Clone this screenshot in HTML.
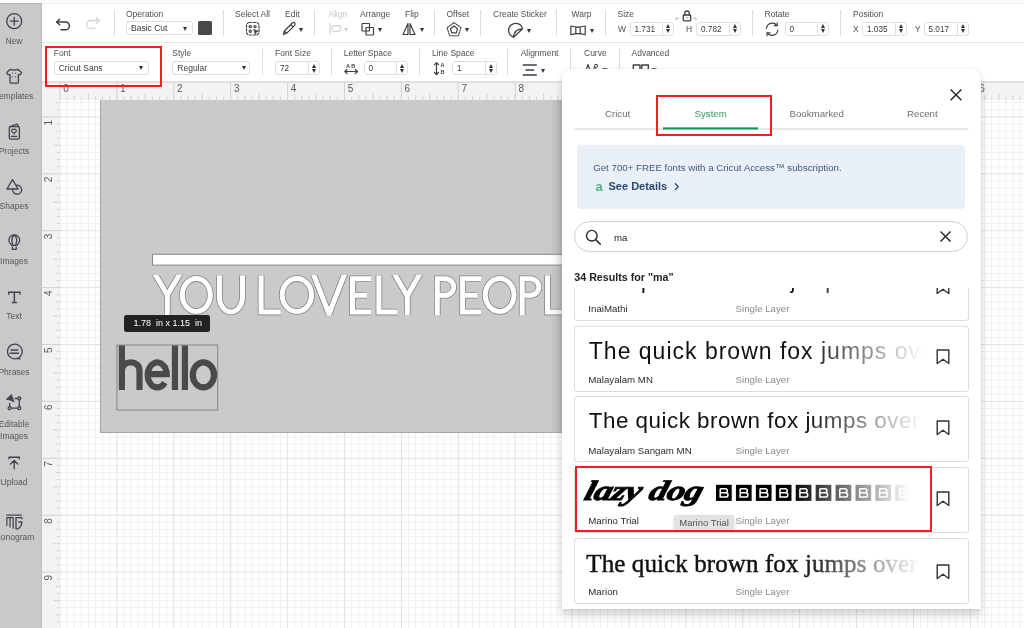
<!DOCTYPE html>
<html><head><meta charset="utf-8">
<style>
*{box-sizing:border-box;margin:0;padding:0}
html,body{width:1024px;height:628px;overflow:hidden;background:#fff;font-family:"Liberation Sans",sans-serif;color:#3a3a3a}
.abs{position:absolute}
#top{left:0;top:0;width:1024px;height:3px;background:#fcfcfc}
#side{left:0;top:3px;width:42px;height:625px;background:#c9c9c9;box-shadow:inset 0 1.5px 0 #bcbcbc,inset -1px 0 0 #bdbdbd}
.si{position:absolute;left:-14px;width:56px;text-align:center;font-size:8.5px;color:#55575f;white-space:nowrap}
#tb1{left:42px;top:3px;width:982px;height:40px;background:#fff;border-top:1.5px solid #eaeaea;border-bottom:1.5px solid #e6e6e6}
#tb2{left:42px;top:43px;width:982px;height:39px;background:#fff;border-bottom:1px solid #e2e2e2}
.lbl{position:absolute;font-size:8.5px;color:#4f4f4f;white-space:nowrap}
.sep{position:absolute;width:1px;background:#e0e0e0}
.dd{position:absolute;border:1px solid #dedede;border-radius:3px;background:#fff;font-size:8.5px;color:#3a3a3a;padding-left:4px;line-height:13px;white-space:nowrap}
.tri{position:absolute;width:0;height:0;border-left:2.3px solid transparent;border-right:2.3px solid transparent;border-top:4.2px solid #333;margin-left:0.7px;margin-top:0.5px}
#rulh{left:42px;top:82px;width:982px;height:18px;background:#f3f3f3}
#rulv{left:42px;top:82px;width:18px;height:546px;background:#f3f3f3}
#grid{left:60px;top:100px;width:964px;height:528px;background-color:#fff;
 background-image:
 linear-gradient(to right,#d9d9d9 1px,transparent 1px),
 linear-gradient(to bottom,#d9d9d9 1px,transparent 1px),
 linear-gradient(to right,#ececec 1px,transparent 1px),
 linear-gradient(to bottom,#ececec 1px,transparent 1px);
 background-size:57px 57px,57px 57px,7.125px 7.125px,7.125px 7.125px;
 background-position:0 17px,0 17px,0 17px,0 17px}
#mat{left:100.2px;top:100px;width:470px;height:332.7px;background:#cacaca;border-left:1.6px solid #a4a4a4;border-bottom:1.6px solid #a4a4a4;border-bottom-left-radius:1.5px}
#panel{left:561.5px;top:69px;width:419.5px;height:540px;background:#fff;border-radius:10px 10px 0 0;box-shadow:0 0 4px rgba(0,0,0,0.09),0 6px 9px rgba(0,0,0,0.17)}
.tabt{font-size:9.7px;color:#707070;white-space:nowrap}
.card{position:absolute;left:12.3px;width:395px;border:1px solid #dcdcdc;border-radius:3px;background:#fff;overflow:hidden}
.cname{position:absolute;left:13px;font-size:9.7px;color:#2a2a2a;white-space:nowrap}
.clay{position:absolute;left:160.3px;font-size:9.7px;color:#8a8a8a;white-space:nowrap}
.bm{position:absolute;left:362px}
.num{position:absolute;top:21.5px;height:14px;border:1px solid #e0e0e0;border-radius:3px;background:#fff;font-size:8.2px;color:#3a3a3a;padding-left:4px;line-height:14.5px}
.num:after{content:"";position:absolute;right:10px;top:0;bottom:0;width:1px;background:#e0e0e0}
.num:before{content:"";position:absolute;right:2.6px;top:1.8px;width:0;height:0;border-left:2.6px solid transparent;border-right:2.6px solid transparent;border-bottom:4px solid #333}
.num i{position:absolute;right:2.6px;top:6.6px;width:0;height:0;border-left:2.6px solid transparent;border-right:2.6px solid transparent;border-top:4px solid #333}
</style></head><body><div style="position:absolute;left:0;top:0;width:1024px;height:628px;will-change:transform">
<div class="abs" id="top"></div>

<!-- grid / rulers -->
<svg class="abs" style="left:0;top:0" width="1024" height="628"><path d="M67.11 100V628M74.22 100V628M81.34 100V628M88.45 100V628M95.56 100V628M102.67 100V628M109.79 100V628M124.01 100V628M131.12 100V628M138.24 100V628M145.35 100V628M152.46 100V628M159.57 100V628M166.69 100V628M180.91 100V628M188.03 100V628M195.14 100V628M202.25 100V628M209.36 100V628M216.47 100V628M223.59 100V628M237.81 100V628M244.92 100V628M252.04 100V628M259.15 100V628M266.26 100V628M273.38 100V628M280.49 100V628M294.71 100V628M301.82 100V628M308.94 100V628M316.05 100V628M323.16 100V628M330.27 100V628M337.39 100V628M351.61 100V628M358.72 100V628M365.84 100V628M372.95 100V628M380.06 100V628M387.18 100V628M394.29 100V628M408.51 100V628M415.62 100V628M422.74 100V628M429.85 100V628M436.96 100V628M444.07 100V628M451.19 100V628M465.41 100V628M472.52 100V628M479.64 100V628M486.75 100V628M493.86 100V628M500.97 100V628M508.09 100V628M522.31 100V628M529.42 100V628M536.54 100V628M543.65 100V628M550.76 100V628M557.88 100V628M564.99 100V628M579.21 100V628M586.32 100V628M593.44 100V628M600.55 100V628M607.66 100V628M614.77 100V628M621.89 100V628M636.11 100V628M643.23 100V628M650.34 100V628M657.45 100V628M664.56 100V628M671.67 100V628M678.79 100V628M693.01 100V628M700.12 100V628M707.24 100V628M714.35 100V628M721.46 100V628M728.57 100V628M735.69 100V628M749.91 100V628M757.02 100V628M764.14 100V628M771.25 100V628M778.36 100V628M785.48 100V628M792.59 100V628M806.81 100V628M813.92 100V628M821.04 100V628M828.15 100V628M835.26 100V628M842.38 100V628M849.49 100V628M863.71 100V628M870.82 100V628M877.94 100V628M885.05 100V628M892.16 100V628M899.27 100V628M906.39 100V628M920.61 100V628M927.73 100V628M934.84 100V628M941.95 100V628M949.06 100V628M956.17 100V628M963.29 100V628M977.51 100V628M984.62 100V628M991.74 100V628M998.85 100V628M1005.96 100V628M1013.07 100V628M1020.19 100V628M60 102.67H1024M60 109.79H1024M60 124.01H1024M60 131.12H1024M60 138.24H1024M60 145.35H1024M60 152.46H1024M60 159.57H1024M60 166.69H1024M60 180.91H1024M60 188.03H1024M60 195.14H1024M60 202.25H1024M60 209.36H1024M60 216.47H1024M60 223.59H1024M60 237.81H1024M60 244.92H1024M60 252.04H1024M60 259.15H1024M60 266.26H1024M60 273.38H1024M60 280.49H1024M60 294.71H1024M60 301.82H1024M60 308.94H1024M60 316.05H1024M60 323.16H1024M60 330.27H1024M60 337.39H1024M60 351.61H1024M60 358.72H1024M60 365.84H1024M60 372.95H1024M60 380.06H1024M60 387.18H1024M60 394.29H1024M60 408.51H1024M60 415.62H1024M60 422.74H1024M60 429.85H1024M60 436.96H1024M60 444.07H1024M60 451.19H1024M60 465.41H1024M60 472.52H1024M60 479.64H1024M60 486.75H1024M60 493.86H1024M60 500.97H1024M60 508.09H1024M60 522.31H1024M60 529.42H1024M60 536.54H1024M60 543.65H1024M60 550.76H1024M60 557.88H1024M60 564.99H1024M60 579.21H1024M60 586.32H1024M60 593.44H1024M60 600.55H1024M60 607.66H1024M60 614.77H1024M60 621.89H1024" stroke="#f0f0f0" stroke-width="1" fill="none"/><path d="M60.00 100V628M116.90 100V628M173.80 100V628M230.70 100V628M287.60 100V628M344.50 100V628M401.40 100V628M458.30 100V628M515.20 100V628M572.10 100V628M629.00 100V628M685.90 100V628M742.80 100V628M799.70 100V628M856.60 100V628M913.50 100V628M970.40 100V628M60 116.90H1024M60 173.80H1024M60 230.70H1024M60 287.60H1024M60 344.50H1024M60 401.40H1024M60 458.30H1024M60 515.20H1024M60 572.10H1024" stroke="#e2e2e2" stroke-width="1" fill="none"/></svg>
<svg class="abs" style="left:0;top:0" width="1024" height="628"><rect x="42" y="82" width="982" height="18" fill="#f3f3f3"/><rect x="42" y="82" width="18" height="546" fill="#f3f3f3"/><path d="M42 82.5H1024" stroke="#dedede"/><path d="M60.00 82V100M67.11 96.8V100M74.22 95.2V100M81.34 96.8V100M88.45 93.3V100M95.56 96.8V100M102.67 95.2V100M109.79 96.8V100M116.90 82V100M124.01 96.8V100M131.12 95.2V100M138.24 96.8V100M145.35 93.3V100M152.46 96.8V100M159.57 95.2V100M166.69 96.8V100M173.80 82V100M180.91 96.8V100M188.03 95.2V100M195.14 96.8V100M202.25 93.3V100M209.36 96.8V100M216.47 95.2V100M223.59 96.8V100M230.70 82V100M237.81 96.8V100M244.92 95.2V100M252.04 96.8V100M259.15 93.3V100M266.26 96.8V100M273.38 95.2V100M280.49 96.8V100M287.60 82V100M294.71 96.8V100M301.82 95.2V100M308.94 96.8V100M316.05 93.3V100M323.16 96.8V100M330.27 95.2V100M337.39 96.8V100M344.50 82V100M351.61 96.8V100M358.72 95.2V100M365.84 96.8V100M372.95 93.3V100M380.06 96.8V100M387.18 95.2V100M394.29 96.8V100M401.40 82V100M408.51 96.8V100M415.62 95.2V100M422.74 96.8V100M429.85 93.3V100M436.96 96.8V100M444.07 95.2V100M451.19 96.8V100M458.30 82V100M465.41 96.8V100M472.52 95.2V100M479.64 96.8V100M486.75 93.3V100M493.86 96.8V100M500.97 95.2V100M508.09 96.8V100M515.20 82V100M522.31 96.8V100M529.42 95.2V100M536.54 96.8V100M543.65 93.3V100M550.76 96.8V100M557.88 95.2V100M564.99 96.8V100M572.10 82V100M579.21 96.8V100M586.32 95.2V100M593.44 96.8V100M600.55 93.3V100M607.66 96.8V100M614.77 95.2V100M621.89 96.8V100M629.00 82V100M636.11 96.8V100M643.23 95.2V100M650.34 96.8V100M657.45 93.3V100M664.56 96.8V100M671.67 95.2V100M678.79 96.8V100M685.90 82V100M693.01 96.8V100M700.12 95.2V100M707.24 96.8V100M714.35 93.3V100M721.46 96.8V100M728.57 95.2V100M735.69 96.8V100M742.80 82V100M749.91 96.8V100M757.02 95.2V100M764.14 96.8V100M771.25 93.3V100M778.36 96.8V100M785.48 95.2V100M792.59 96.8V100M799.70 82V100M806.81 96.8V100M813.92 95.2V100M821.04 96.8V100M828.15 93.3V100M835.26 96.8V100M842.38 95.2V100M849.49 96.8V100M856.60 82V100M863.71 96.8V100M870.82 95.2V100M877.94 96.8V100M885.05 93.3V100M892.16 96.8V100M899.27 95.2V100M906.39 96.8V100M913.50 82V100M920.61 96.8V100M927.73 95.2V100M934.84 96.8V100M941.95 93.3V100M949.06 96.8V100M956.17 95.2V100M963.29 96.8V100M970.40 82V100M977.51 96.8V100M984.62 95.2V100M991.74 96.8V100M998.85 93.3V100M1005.96 96.8V100M1013.07 95.2V100M1020.19 96.8V100M55.2 102.67H60M56.8 109.79H60M42 116.90H60M56.8 124.01H60M55.2 131.12H60M56.8 138.24H60M53.3 145.35H60M56.8 152.46H60M55.2 159.57H60M56.8 166.69H60M42 173.80H60M56.8 180.91H60M55.2 188.03H60M56.8 195.14H60M53.3 202.25H60M56.8 209.36H60M55.2 216.47H60M56.8 223.59H60M42 230.70H60M56.8 237.81H60M55.2 244.92H60M56.8 252.04H60M53.3 259.15H60M56.8 266.26H60M55.2 273.38H60M56.8 280.49H60M42 287.60H60M56.8 294.71H60M55.2 301.82H60M56.8 308.94H60M53.3 316.05H60M56.8 323.16H60M55.2 330.27H60M56.8 337.39H60M42 344.50H60M56.8 351.61H60M55.2 358.72H60M56.8 365.84H60M53.3 372.95H60M56.8 380.06H60M55.2 387.18H60M56.8 394.29H60M42 401.40H60M56.8 408.51H60M55.2 415.62H60M56.8 422.74H60M53.3 429.85H60M56.8 436.96H60M55.2 444.07H60M56.8 451.19H60M42 458.30H60M56.8 465.41H60M55.2 472.52H60M56.8 479.64H60M53.3 486.75H60M56.8 493.86H60M55.2 500.97H60M56.8 508.09H60M42 515.20H60M56.8 522.31H60M55.2 529.42H60M56.8 536.54H60M53.3 543.65H60M56.8 550.76H60M55.2 557.88H60M56.8 564.99H60M42 572.10H60M56.8 579.21H60M55.2 586.32H60M56.8 593.44H60M53.3 600.55H60M56.8 607.66H60M55.2 614.77H60M56.8 621.89H60" stroke="#d2d2d2" stroke-width="1" fill="none"/><g font-family="Liberation Sans" font-size="10" fill="#5a5a5a"><text x="63.2" y="92.4">0</text><text x="120.1" y="92.4">1</text><text x="177.0" y="92.4">2</text><text x="233.9" y="92.4">3</text><text x="290.8" y="92.4">4</text><text x="347.7" y="92.4">5</text><text x="404.6" y="92.4">6</text><text x="461.5" y="92.4">7</text><text x="518.4" y="92.4">8</text><text x="575.3" y="92.4">9</text><text x="632.2" y="92.4">10</text><text x="689.1" y="92.4">11</text><text x="746.0" y="92.4">12</text><text x="802.9" y="92.4">13</text><text x="859.8" y="92.4">14</text><text x="916.7" y="92.4">15</text><text x="973.6" y="92.4">16</text><text transform="translate(51.5 125.4) rotate(-90)" x="0" y="0">1</text><text transform="translate(51.5 182.3) rotate(-90)" x="0" y="0">2</text><text transform="translate(51.5 239.2) rotate(-90)" x="0" y="0">3</text><text transform="translate(51.5 296.1) rotate(-90)" x="0" y="0">4</text><text transform="translate(51.5 353.0) rotate(-90)" x="0" y="0">5</text><text transform="translate(51.5 409.9) rotate(-90)" x="0" y="0">6</text><text transform="translate(51.5 466.8) rotate(-90)" x="0" y="0">7</text><text transform="translate(51.5 523.7) rotate(-90)" x="0" y="0">8</text><text transform="translate(51.5 580.6) rotate(-90)" x="0" y="0">9</text></g></svg>
<div class="abs" id="mat"></div>
<svg class="abs" style="left:0;top:0" width="1024" height="628">
 <defs><clipPath id="ycl"><rect x="0" y="274.8" width="1024" height="40.9"/></clipPath><path id="you" d="M154.5 273 L167.3 295 L180.4 273 M167.3 295 V315.3
   M219.4 275.4 V297 A11.55 14.9 0 0 0 242.5 297 V275.4
   M261.1 275.5 V312.1 H280.8
   M313 273 L329 314 L345 273
   M371.3 278.7 H352.5 V312.1 H371.3 M352.5 295.3 H366.9
   M378.9 275.5 V312.1 H397.6
   M394 273 L407.3 296 L420.3 273 M407.3 296 V315.3
   M437.3 315.3 V278.7 H445 A8.7 8.3 0 0 1 445 295.3 H437.3
   M481.4 278.7 H462.6 V312.1 H481.4 M462.6 295.3 H477
   M522.2 315.3 V278.7 H530.2 A8.7 8.3 0 0 1 530.2 295.3 H522.2
   M547.5 275.5 V312.1 H567"/><linearGradient id="msh" x1="0" x2="1"><stop offset="0" stop-color="#000" stop-opacity="0"/><stop offset="1" stop-color="#000" stop-opacity="0.09"/></linearGradient></defs>
 <rect x="152.5" y="254.3" width="420" height="10.8" fill="#fff" stroke="#8a8a8a" stroke-width="1"/>
 <g fill="none" stroke-linecap="butt" stroke-linejoin="miter" clip-path="url(#ycl)">
  <use href="#you" stroke="#858585" stroke-width="6.6"/>
  <ellipse cx="196.3" cy="295" rx="14" ry="16.4" stroke="#858585" stroke-width="6.6"/>
  <ellipse cx="296.85" cy="295" rx="14.65" ry="16.4" stroke="#858585" stroke-width="6.6"/>
  <ellipse cx="499.65" cy="295" rx="14.35" ry="16.4" stroke="#858585" stroke-width="6.6"/>
  <use href="#you" stroke="#fff" stroke-width="5"/>
  <ellipse cx="196.3" cy="295" rx="14" ry="16.4" stroke="#fff" stroke-width="5"/>
  <ellipse cx="296.85" cy="295" rx="14.65" ry="16.4" stroke="#fff" stroke-width="5"/>
  <ellipse cx="499.65" cy="295" rx="14.35" ry="16.4" stroke="#fff" stroke-width="5"/>
 </g>
 <rect x="116.9" y="345" width="100.8" height="65" fill="none" stroke="#858585" stroke-width="1"/>
 <g fill="none" stroke="#4a4a4a" stroke-width="6.2" stroke-linecap="butt">
  <path d="M121.9 345.4 V390 M121.9 371 C121.9 365 126 362.4 130.7 362.4 C135.5 362.4 139.5 365 139.5 371 V390"/>
  <path d="M147.7 374.2 H166.78 A9.55 12.5 0 1 0 164.8 382.6"/>
  <path d="M174.95 345.4 V390 M184.9 345.4 V390"/>
  <ellipse cx="203.4" cy="374.9" rx="10.6" ry="12.5"/>
 </g>
 <rect x="550" y="100" width="12" height="332" fill="url(#msh)"/>
</svg>
<div class="abs" style="left:124px;top:315.2px;width:86.3px;height:16.5px;background:#222;border-radius:2.5px;color:#fff;font-size:9px;line-height:16.5px;white-space:pre;padding-left:9.4px">1.78  in x 1.15  in</div>

<!-- sidebar -->
<div class="abs" id="side">
<svg width="42" height="625" viewBox="0 3 42 625" style="position:absolute;left:0;top:0" fill="none" stroke="#40434d" stroke-width="1.3" stroke-linecap="round" stroke-linejoin="round">
 <circle cx="14.2" cy="21.2" r="7.5"/>
 <path d="M10.4 21.2h7.6M14.2 17.4v7.6"/>
 <path d="M10.4 69.3 Q14 70.8 17.6 69.3 L21.6 72.6 L20.3 74.6 H18.4 V82 Q18.4 83.2 17.2 83.2 H11.2 Q10 83.2 10 82 V74.6 H8.1 L6.7 72.6 Z"/>
 <g fill="#40434d" stroke="none"><circle cx="12.4" cy="73.1" r="0.65"/><circle cx="15.6" cy="73.1" r="0.65"/><circle cx="12.4" cy="76.8" r="0.65"/><circle cx="15.6" cy="76.8" r="0.65"/></g>
 <rect x="9.3" y="126.7" width="10.1" height="12.4" rx="1.3"/>
 <path d="M9.8 126.6 L17.2 124.2 L18.3 126.4"/>
 <path d="M14 133.6 L11.9 131.5 A1.35 1.35 0 0 1 14 129.7 A1.35 1.35 0 0 1 16.1 131.5 Z" stroke-width="1.1"/>
 <path d="M11.4 136.4 H16.7"/>
 <path d="M12.5 179.6 L6.9 189 H18.1 Z"/>
 <path d="M16 185.3 A4.55 4.55 0 1 1 12.6 189.3"/>
 <path d="M14.3 235 C10.8 235 8.9 237.6 8.9 240.3 C8.9 242.8 10.8 244 11.6 245.3 H17 C17.8 244 19.7 242.8 19.7 240.3 C19.7 237.6 17.8 235 14.3 235 Z"/>
 <path d="M14.3 235 C12.5 236.2 11.9 238.3 11.9 240.3 C11.9 242.3 12.6 244 13 245.3 M14.3 235 C16.1 236.2 16.7 238.3 16.7 240.3 C16.7 242.3 16 244 15.6 245.3"/>
 <path d="M12.4 247.1 V249.4 H16.2 V247.1"/>
 <path d="M8.7 294.8 V292.3 H20 V294.8 M14.35 292.3 V302.5 M11.8 302.5 H16.9" stroke-width="1.4" stroke-linecap="butt"/>
 <path d="M19 357.5 A7.3 7.3 0 1 0 17.2 358.4 L20 358.9 Z"/>
 <path d="M11 350 H17.7 M10.2 353.3 H18.4" stroke-width="1.4"/>
 <path d="M11.2 394.7 L6.3 399.3 L10.2 400 L13.7 401.7 Z" fill="#40434d" stroke-width="0.9"/>
 <path d="M15.3 398.5 H17.8 M19.3 400 V406.7 M11.2 408.2 H17.8 M9.65 403.3 V406.7"/>
 <circle cx="19.3" cy="398.5" r="1.5"/><circle cx="19.3" cy="408.2" r="1.5"/><circle cx="9.65" cy="408.2" r="1.5"/>
 <path d="M9 458.8 V457.2 H19.3 V458.8" stroke-width="1.4"/>
 <path d="M14.2 468.8 V460.8 M10.5 464 L14.2 460.5 L17.8 464" stroke-width="1.3"/>
 <path d="M6.3 515.1 H21.9" stroke="#5a5e68" stroke-width="1.5" stroke-linecap="butt"/>
 <path d="M6.85 525.8 V517.6 H13.15 V528.8 M10 517.6 V527.6" stroke-width="1.2" stroke-linecap="butt"/>
 <path d="M21.9 519.2 V517.6 H16 V528.8 H18.2 Q21.9 526 21.9 522 H18.4" stroke-width="1.3" stroke-linecap="butt"/>
</svg>
<div class="si" style="top:33px">New</div>
<div class="si" style="top:88px">Templates</div>
<div class="si" style="top:143px">Projects</div>
<div class="si" style="top:198px">Shapes</div>
<div class="si" style="top:253px">Images</div>
<div class="si" style="top:308px">Text</div>
<div class="si" style="top:364px">Phrases</div>
<div class="si" style="top:416px">Editable</div>
<div class="si" style="top:428px">Images</div>
<div class="si" style="top:474px">Upload</div>
<div class="si" style="top:529px">Monogram</div>
</div>

<!-- toolbars -->
<div class="abs" id="tb1"></div>
<div class="abs" id="tb2"></div>
<div class="abs" id="tbc" style="left:0;top:0;width:1024px;height:82px">
<svg width="1024" height="82" style="position:absolute;left:0;top:0" fill="none" stroke="#3d3f47" stroke-width="1.2" stroke-linecap="round" stroke-linejoin="round">
 <!-- undo -->
 <path d="M56.8 22 H65.5 A3.9 3.9 0 0 1 65.5 29.8 H61" stroke-width="1.5"/>
 <path d="M59.6 19.2 L56.8 22 L59.6 24.8" stroke-width="1.5"/>
 <!-- redo -->
 <path d="M99.2 20.5 H90.5 A3.9 3.9 0 0 0 90.5 28.3 H95" stroke="#d4d4d4" stroke-width="1.3"/>
 <path d="M96.4 17.7 L99.2 20.5 L96.4 23.3" stroke="#d4d4d4" stroke-width="1.3"/>
 <!-- separators row1 -->
 <g stroke="#dcdcdc" stroke-width="1" stroke-linecap="butt">
 <path d="M114.5 10 V36 M223.5 10 V36 M314.5 10 V36 M434.5 10 V36 M480.5 10 V36 M556.5 10 V36 M605.5 10 V36 M752.5 10 V36 M840.5 10 V36"/>
 <path d="M262.5 49 V75 M331.5 49 V75 M419.5 49 V75 M507.5 49 V75 M570.5 49 V75 M619.5 49 V75"/>
 </g>
 <!-- select all icon -->
 <rect x="246.5" y="22.5" width="12.5" height="12.5" rx="3" stroke-dasharray="2.2 1.6" stroke-width="1.2"/>
 <circle cx="250.3" cy="26.6" r="1.1"/><circle cx="255" cy="26.6" r="1.1"/><circle cx="250.3" cy="31.2" r="1.1"/>
 <path d="M254 29.5 L258 31.2 L256.2 32 L255.5 34 Z" fill="#3d3f47" stroke-width="0.8"/>
 <!-- edit pencil -->
 <path d="M283.5 34.5 L284.3 31 L292.3 23 A1.4 1.4 0 0 1 294.6 25.3 L286.6 33.3 Z M290.8 24.5 L293.1 26.8 M284.3 31 L286.6 33.3"/>
 <!-- align (disabled) -->
 <g stroke="#d0d0d0"><path d="M330 23.5 V33.5"/><rect x="332" y="25.7" width="8.5" height="5.5" rx="1.5"/></g>
 <!-- arrange -->
 <rect x="362" y="23.5" width="7.5" height="7.5" rx="0.5"/><rect x="366" y="27.5" width="7.5" height="7.5" rx="0.5"/>
 <!-- flip -->
 <path d="M408 23.5 L403 34.5 H408 Z M410 23.5 L415 34.5 H410 Z"/>
 <!-- offset -->
 <path d="M454 22.6 L461 27.7 L458.3 35.8 H449.7 L447 27.7 Z" stroke-dasharray="1.5 1.2" stroke-width="1.1"/>
 <path d="M454 26 L457.6 28.7 L456.2 32.9 H451.8 L450.4 28.7 Z" stroke-width="1.2"/>
 <!-- sticker -->
 <path d="M513.5 37.2 A7.1 7.1 0 1 1 522.6 28.8 L513.5 37.2 M522.6 28.8 C518.5 28.6 514 31 513.5 37.2" stroke-width="1.3"/>
 <!-- warp -->
 <path d="M570.8 26 Q578 28.2 585.2 26 V34.8 Q578 32.6 570.8 34.8 Z M575.8 27.3 V33.5 M580.2 27.3 V33.5"/>
 <!-- lock -->
 <path d="M676 20 V18 H678.5 M696 20 V18 H693.5" stroke="#aaa" stroke-width="0.9"/>
 <rect x="683.3" y="15" width="7.4" height="5.8" rx="0.8" stroke-width="1.3"/>
 <path d="M684.8 15 V13.2 A2.2 2.2 0 0 1 689.2 13.2 V15" stroke-width="1.3"/>
 <circle cx="687" cy="18" r="0.6" fill="#3d3f47" stroke="none"/>
 <!-- rotate -->
 <path d="M766.5 28.3 A5.8 5.8 0 0 1 776.8 25.4 M777.8 30.2 A5.8 5.8 0 0 1 767.4 33.1" stroke-width="1.2"/>
 <path d="M777.2 22.8 V25.7 H774.2 M767 35.7 V32.8 H770" stroke-width="1.2"/>
 <!-- letter space -->
 <path d="M344.8 71.5 H357.5 M347 69.5 L344.8 71.5 L347 73.5 M355.3 69.5 L357.5 71.5 L355.3 73.5" stroke-width="1.2"/>
 <!-- line space -->
 <path d="M436.5 62.7 V74.5 M434.5 64.7 L436.5 62.7 L438.5 64.7 M434.5 72.5 L436.5 74.5 L438.5 72.5" stroke-width="1.2"/>
 <!-- alignment -->
 <path d="M522.8 65 H536.8 M525.5 70 H534 M522.8 75 H536.8" stroke-width="1.3" stroke-linecap="butt"/>
 <!-- curve (partially) -->
 <path d="M586.3 70 L588 64.5 L590 70" stroke-width="1.1"/><path d="M593.5 70 L595 64.5 H597 Q598.3 64.8 597.5 66.8 L595 67.3 L597 70" stroke-width="1"/><path d="M603 68.8 H607 M652 68.8 H656" stroke-width="1.3"/>
 <!-- advanced -->
 <path d="M633.3 70 V65 H640 V70 M641.8 70 V65 H648.3 V70" stroke-width="1.4"/>
</svg>
<div class="lbl" style="left:126px;top:9px">Operation</div>
<div class="dd" style="left:126px;top:21px;width:67px;height:14px">Basic Cut</div>
<div class="tri" style="left:182px;top:26px"></div>
<div class="abs" style="left:197.5px;top:21px;width:14px;height:14px;background:#4a4a4a;border-radius:1.5px"></div>
<div class="lbl" style="left:235px;top:9px">Select All</div>
<div class="lbl" style="left:285px;top:9px">Edit</div>
<div class="tri" style="left:298.5px;top:27px"></div>
<div class="lbl" style="left:328.5px;top:9px;color:#c4c4c4">Align</div>
<div class="tri" style="left:343.5px;top:27px;border-top-color:#d0d0d0"></div>
<div class="lbl" style="left:360px;top:9px">Arrange</div>
<div class="tri" style="left:377px;top:27px"></div>
<div class="lbl" style="left:405px;top:9px">Flip</div>
<div class="tri" style="left:419px;top:27px"></div>
<div class="lbl" style="left:446.5px;top:9px">Offset</div>
<div class="tri" style="left:464px;top:27px"></div>
<div class="lbl" style="left:493px;top:9px">Create Sticker</div>
<div class="tri" style="left:526.5px;top:28.5px"></div>
<div class="lbl" style="left:571.5px;top:9px">Warp</div>
<div class="tri" style="left:589px;top:28px"></div>
<div class="lbl" style="left:617.5px;top:9px">Size</div>
<div class="lbl" style="left:618px;top:24px">W</div>
<div class="num" style="left:629.5px;width:44px">1.731<i></i></div>
<div class="lbl" style="left:686px;top:24px">H</div>
<div class="num" style="left:696px;width:44.5px">0.782<i></i></div>
<div class="lbl" style="left:764.5px;top:9px">Rotate</div>
<div class="num" style="left:784.5px;width:44.5px">0<i></i></div>
<div class="lbl" style="left:853px;top:9px">Position</div>
<div class="lbl" style="left:853px;top:24px">X</div>
<div class="num" style="left:862px;width:45px">1.035<i></i></div>
<div class="lbl" style="left:915px;top:24px">Y</div>
<div class="num" style="left:923.5px;width:45px">5.017<i></i></div>

<div class="lbl" style="left:53.7px;top:48px">Font</div>
<div class="dd" style="left:53.7px;top:60.5px;width:95px;height:14.5px">Cricut Sans</div>
<div class="tri" style="left:138px;top:65.5px"></div>
<div class="lbl" style="left:172.3px;top:48px">Style</div>
<div class="dd" style="left:172.3px;top:61px;width:78px;height:14px">Regular</div>
<div class="tri" style="left:241px;top:65.5px"></div>
<div class="lbl" style="left:275px;top:48px">Font Size</div>
<div class="num" style="left:275px;top:61px;width:45px">72<i></i></div>
<div class="lbl" style="left:343.7px;top:48px">Letter Space</div>
<div class="num" style="left:363.5px;top:61px;width:44.5px">0<i></i></div>
<div class="lbl" style="left:432px;top:48px">Line Space</div>
<div class="num" style="left:452px;top:61px;width:44.5px">1<i></i></div>
<div class="lbl" style="left:520.7px;top:48px">Alignment</div>
<div class="tri" style="left:540.5px;top:68.5px"></div>
<div class="lbl" style="left:584px;top:48px">Curve</div>
<div class="lbl" style="left:631.5px;top:48px">Advanced</div>
<div class="abs" style="left:346px;top:62.5px;font-size:5.5px;font-weight:bold;color:#3d3f47;letter-spacing:1.2px">AB</div>
<div class="abs" style="left:440.5px;top:62px;font-size:5.5px;font-weight:bold;color:#3d3f47;line-height:6.5px">A<br>B</div>
<div class="abs" style="left:45px;top:46px;width:116.5px;height:41px;border:2px solid #f01e1e"></div>
</div>

<!-- font panel -->
<div class="abs" id="panel"></div>
<div class="abs" style="left:562px;top:69px;width:419px;height:540px;overflow:hidden">
 <svg class="abs" style="left:0;top:0" width="419" height="540" fill="none">
  <path d="M388.6 20.5 L399.4 31.3 M399.4 20.5 L388.6 31.3" stroke="#2a2a2a" stroke-width="1.5"/>
  <rect x="12.4" y="59.3" width="394.2" height="1.4" fill="#dedede"/>
  <rect x="101" y="58.4" width="95" height="2" fill="#1d8a4e"/>
 </svg>
 <div class="abs tabt" style="left:43px;top:39px">Cricut</div>
 <div class="abs tabt" style="left:132.5px;top:39px;color:#2e9d61">System</div>
 <div class="abs tabt" style="left:227.5px;top:39px">Bookmarked</div>
 <div class="abs tabt" style="left:345px;top:39px">Recent</div>
 <div class="abs" style="left:93.5px;top:25.7px;width:116px;height:41.5px;border:2px solid #ee1f1f"></div>
 <div class="abs" style="left:15.3px;top:76px;width:388px;height:63.5px;background:#eaf0f8;border-radius:4px"></div>
 <div class="abs" style="left:31.2px;top:92.5px;font-size:9.7px;color:#3f5878;white-space:nowrap">Get 700+ FREE fonts with a Cricut Access™ subscription.</div>
 <div class="abs" style="left:33.5px;top:109.5px;font-size:13px;color:#4db580;font-weight:bold">a</div>
 <svg class="abs" style="left:0;top:0" width="419" height="540" fill="none"><path d="M112.9 114.3 L116.2 117.7 L112.9 121.1" stroke="#2b4873" stroke-width="1.3"/></svg>
 <div class="abs" style="left:46.5px;top:110.5px;font-size:11px;font-weight:bold;color:#2b4873;white-space:nowrap">See Details</div>
 <div class="abs" style="left:12.3px;top:152.3px;width:394px;height:31px;border:1px solid #d2d2d2;border-radius:16px;background:#fff"></div>
 <svg class="abs" style="left:0;top:0" width="419" height="540" fill="none">
  <circle cx="29.8" cy="166.7" r="5.3" stroke="#2a2a2a" stroke-width="1.4"/>
  <path d="M33.7 170.6 L38.3 175.2" stroke="#2a2a2a" stroke-width="1.5" stroke-linecap="round"/>
  <path d="M378.5 162.5 L388.5 172.5 M388.5 162.5 L378.5 172.5" stroke="#2a2a2a" stroke-width="1.5"/>
 </svg>
 <div class="abs" style="left:52px;top:163px;font-size:9.7px;color:#222">ma</div>
 <div class="abs" style="left:12.3px;top:201.5px;font-size:10.7px;font-weight:bold;color:#222;white-space:nowrap">34 Results for "ma"</div>
 <div class="abs" style="left:0;top:219px;width:419px;height:321px;overflow:hidden">
<div class="card" style="top:-33.2px;height:66px"><div class="abs" style="left:15px;top:12px;font-size:21.7px;letter-spacing:0px;color:#111;white-space:nowrap;-webkit-mask-image:linear-gradient(to right,#000 0px,#000 215px,rgba(0,0,0,0.3) 300px,transparent 335px)">The quick brown fox jumps over the</div><div class="cname" style="top:47.5px">InaiMathi</div><div class="clay" style="top:47.5px">Single Layer</div><svg class="abs" style="left:360.5px;top:22.8px" width="15" height="16" fill="none"><path d="M1.2 14.5 V1 H12.8 V14.5 L7 10.2 Z" stroke="#333" stroke-width="1.4" stroke-linejoin="round"/></svg></div><div class="card" style="top:37.5px;height:66px"><div class="abs" style="left:13.5px;top:11px;font-size:23px;letter-spacing:1px;color:#111;white-space:nowrap;-webkit-mask-image:linear-gradient(to right,#000 0px,#000 215px,rgba(0,0,0,0.3) 300px,transparent 335px)">The quick brown fox jumps over the</div><div class="cname" style="top:47.5px">Malayalam MN</div><div class="clay" style="top:47.5px">Single Layer</div><svg class="abs" style="left:360.5px;top:22.8px" width="15" height="16" fill="none"><path d="M1.2 14.5 V1 H12.8 V14.5 L7 10.2 Z" stroke="#333" stroke-width="1.4" stroke-linejoin="round"/></svg></div><div class="card" style="top:108.1px;height:66px"><div class="abs" style="left:13.5px;top:10.5px;font-size:22.4px;letter-spacing:0.5px;color:#111;white-space:nowrap;-webkit-mask-image:linear-gradient(to right,#000 0px,#000 215px,rgba(0,0,0,0.3) 300px,transparent 335px)">The quick brown fox jumps over the</div><div class="cname" style="top:47.5px">Malayalam Sangam MN</div><div class="clay" style="top:47.5px">Single Layer</div><svg class="abs" style="left:360.5px;top:22.8px" width="15" height="16" fill="none"><path d="M1.2 14.5 V1 H12.8 V14.5 L7 10.2 Z" stroke="#333" stroke-width="1.4" stroke-linejoin="round"/></svg></div><div class="card" style="top:178.8px;height:66px"><div class="abs" style="left:0;top:0;width:394px;height:65px;-webkit-mask-image:linear-gradient(to right,#000 0px,#000 215px,rgba(0,0,0,0.3) 300px,transparent 335px)"><div class="abs" style="left:15px;top:7.5px;font-family:'Liberation Serif',serif;font-size:28px;font-weight:bold;font-style:italic;color:#000;-webkit-text-stroke:0.9px #000;transform:scaleX(1.3) skewX(-12deg);transform-origin:0 0;letter-spacing:-0.5px">lazy dog</div><svg class="abs" style="left:0;top:0" width="394" height="65"><g transform="translate(141.00 16.8)"><rect width="15.7" height="16.1" fill="#000"/><path d="M4.2 4 V12.2 H9.6 Q12 12.2 12 10.1 Q12 8 9.6 8 H4.2 M4.2 4 H9.2 Q11.4 4 11.4 6 Q11.4 8 9.2 8" fill="none" stroke="#fff" stroke-width="1.5"/></g><g transform="translate(160.93 16.8)"><rect width="15.7" height="16.1" fill="#000"/><path d="M4.2 4 V12.2 H9.6 Q12 12.2 12 10.1 Q12 8 9.6 8 H4.2 M4.2 4 H9.2 Q11.4 4 11.4 6 Q11.4 8 9.2 8" fill="none" stroke="#fff" stroke-width="1.5"/></g><g transform="translate(180.86 16.8)"><rect width="15.7" height="16.1" fill="#000"/><path d="M4.2 4 V12.2 H9.6 Q12 12.2 12 10.1 Q12 8 9.6 8 H4.2 M4.2 4 H9.2 Q11.4 4 11.4 6 Q11.4 8 9.2 8" fill="none" stroke="#fff" stroke-width="1.5"/></g><g transform="translate(200.79 16.8)"><rect width="15.7" height="16.1" fill="#000"/><path d="M4.2 4 V12.2 H9.6 Q12 12.2 12 10.1 Q12 8 9.6 8 H4.2 M4.2 4 H9.2 Q11.4 4 11.4 6 Q11.4 8 9.2 8" fill="none" stroke="#fff" stroke-width="1.5"/></g><g transform="translate(220.72 16.8)"><rect width="15.7" height="16.1" fill="#000"/><path d="M4.2 4 V12.2 H9.6 Q12 12.2 12 10.1 Q12 8 9.6 8 H4.2 M4.2 4 H9.2 Q11.4 4 11.4 6 Q11.4 8 9.2 8" fill="none" stroke="#fff" stroke-width="1.5"/></g><g transform="translate(240.65 16.8)"><rect width="15.7" height="16.1" fill="#000"/><path d="M4.2 4 V12.2 H9.6 Q12 12.2 12 10.1 Q12 8 9.6 8 H4.2 M4.2 4 H9.2 Q11.4 4 11.4 6 Q11.4 8 9.2 8" fill="none" stroke="#fff" stroke-width="1.5"/></g><g transform="translate(260.58 16.8)"><rect width="15.7" height="16.1" fill="#000"/><path d="M4.2 4 V12.2 H9.6 Q12 12.2 12 10.1 Q12 8 9.6 8 H4.2 M4.2 4 H9.2 Q11.4 4 11.4 6 Q11.4 8 9.2 8" fill="none" stroke="#fff" stroke-width="1.5"/></g><g transform="translate(280.51 16.8)"><rect width="15.7" height="16.1" fill="#000"/><path d="M4.2 4 V12.2 H9.6 Q12 12.2 12 10.1 Q12 8 9.6 8 H4.2 M4.2 4 H9.2 Q11.4 4 11.4 6 Q11.4 8 9.2 8" fill="none" stroke="#fff" stroke-width="1.5"/></g><g transform="translate(300.44 16.8)"><rect width="15.7" height="16.1" fill="#000"/><path d="M4.2 4 V12.2 H9.6 Q12 12.2 12 10.1 Q12 8 9.6 8 H4.2 M4.2 4 H9.2 Q11.4 4 11.4 6 Q11.4 8 9.2 8" fill="none" stroke="#fff" stroke-width="1.5"/></g><g transform="translate(320.37 16.8)"><rect width="15.7" height="16.1" fill="#000"/><path d="M4.2 4 V12.2 H9.6 Q12 12.2 12 10.1 Q12 8 9.6 8 H4.2 M4.2 4 H9.2 Q11.4 4 11.4 6 Q11.4 8 9.2 8" fill="none" stroke="#fff" stroke-width="1.5"/></g></svg></div><div class="cname" style="top:47.5px">Marino Trial</div><div class="clay" style="top:47.5px">Single Layer</div><svg class="abs" style="left:360.5px;top:22.8px" width="15" height="16" fill="none"><path d="M1.2 14.5 V1 H12.8 V14.5 L7 10.2 Z" stroke="#333" stroke-width="1.4" stroke-linejoin="round"/></svg><div class="abs" style="left:99px;top:47.5px;width:59.5px;height:15.3px;background:#e2e2e2;border-radius:3px;box-shadow:0 1px 3px rgba(0,0,0,0.2);font-size:9.5px;color:#555;line-height:15.3px;text-align:center;white-space:nowrap">Marino Trial</div></div><div class="card" style="top:249.9px;height:66px"><div class="abs" style="left:11px;top:11px;font-family:'Liberation Serif',serif;font-size:25px;letter-spacing:0.1px;-webkit-text-stroke:0.45px #111;color:#111;white-space:nowrap;-webkit-mask-image:linear-gradient(to right,#000 0px,#000 215px,rgba(0,0,0,0.3) 300px,transparent 335px)">The quick brown fox jumps over the</div><div class="cname" style="top:46.900000000000006px">Marion</div><div class="clay" style="top:46.900000000000006px">Single Layer</div><svg class="abs" style="left:361px;top:25.0px" width="15" height="16" fill="none"><path d="M1.2 14.5 V1 H12.8 V14.5 L7 10.2 Z" stroke="#333" stroke-width="1.4" stroke-linejoin="round"/></svg></div>
 </div>
</div>
<div class="abs" style="left:574.5px;top:466.3px;width:357px;height:66.2px;border:2px solid #ee1f1f"></div>

</div></body></html>
